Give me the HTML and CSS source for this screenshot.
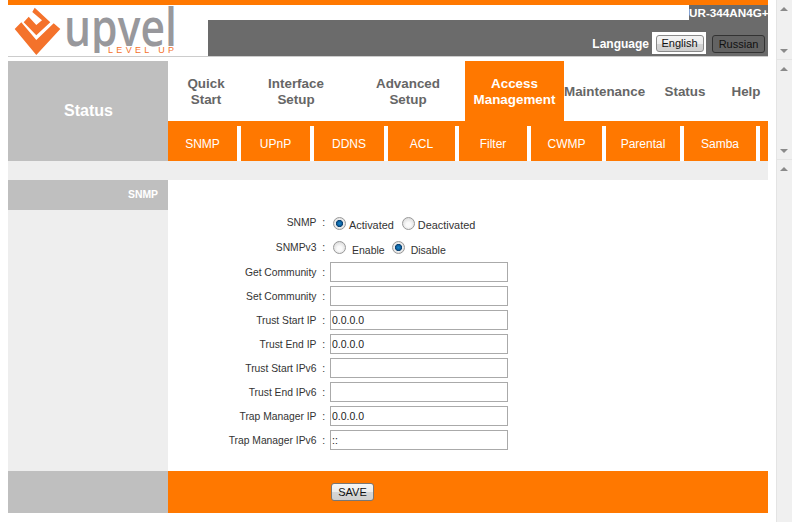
FILE: index.html
```html
<!DOCTYPE html>
<html lang="en">
<head>
<meta charset="utf-8">
<title>UR-344AN4G+ Access Management</title>
<link rel="stylesheet" href="styles.css">
</head>
<body>
<div class="page">
  <div class="main">
    <div class="topline"></div>
    <header class="header">
      <div class="logo">
        <svg class="logo-svg" width="200" height="51" viewBox="0 0 200 51">
          <defs><clipPath id="word-clip"><rect x="50" y="0" width="130" height="48"/></clipPath></defs>
          <path class="mark" d="M6.7 24 13.3 17.3 28.3 35 45.7 18.3 52.3 24 28.3 50Z"/>
          <path class="mark" d="M26.7 2.7 42.3 17.3 28.3 30.3 15.7 17.3 20.7 11.7 28.3 20 34 15.3 24.3 7Z"/>
          <g clip-path="url(#word-clip)">
            <text class="logo-word" transform="translate(56 41) scale(.82 1)">upvel</text>
          </g>
          <text class="logo-tag" x="100" y="47.5" textLength="66">LEVEL UP</text>
        </svg>
      </div>
      <div class="header-right">
        <div class="model-row"><span class="model">UR-344AN4G+</span></div>
        <div class="lang-bar">
          <span class="lang-label">Language</span>
          <span class="lang-halo"><button class="btn-en" type="button">English</button></span>
          <button class="btn-ru" type="button">Russian</button>
        </div>
      </div>
    </header>

    <div class="nav-wrap">
      <div class="section-title">Status</div>
      <div class="nav-right">
        <nav class="menu">
          <a class="m m-quick">Quick<br>Start</a>
          <a class="m m-interface">Interface<br>Setup</a>
          <a class="m m-advanced">Advanced<br>Setup</a>
          <a class="m m-access active">Access<br>Management</a>
          <a class="m m-maint">Maintenance</a>
          <a class="m m-status">Status</a>
          <a class="m m-help">Help</a>
        </nav>
        <nav class="submenu">
          <a class="s">SNMP</a>
          <a class="s">UPnP</a>
          <a class="s">DDNS</a>
          <a class="s">ACL</a>
          <a class="s">Filter</a>
          <a class="s">CWMP</a>
          <a class="s">Parental</a>
          <a class="s">Samba</a>
        </nav>
      </div>
    </div>
    <div class="band"></div>

    <div class="content">
      <aside class="side"><div class="side-head">SNMP</div></aside>
      <form class="form">
        <div class="row">
          <span class="lbl lbl-a">SNMP&nbsp; :</span>
          <span class="val">
            <input class="radio" type="radio" name="snmp" checked><span class="opt opt-a">Activated</span>
            <input class="radio radio-2" type="radio" name="snmp"><span class="opt opt-a">Deactivated</span>
          </span>
        </div>
        <div class="row">
          <span class="lbl lbl-b">SNMPv3&nbsp; :</span>
          <span class="val">
            <input class="radio" type="radio" name="v3"><span class="opt opt-b">Enable</span>
            <input class="radio radio-3" type="radio" name="v3" checked><span class="opt opt-b">Disable</span>
          </span>
        </div>
        <div class="row"><span class="lbl">Get Community&nbsp; :</span><input class="field" type="text"></div>
        <div class="row"><span class="lbl">Set Community&nbsp; :</span><input class="field" type="text"></div>
        <div class="row"><span class="lbl">Trust Start IP&nbsp; :</span><input class="field" type="text" value="0.0.0.0"></div>
        <div class="row"><span class="lbl">Trust End IP&nbsp; :</span><input class="field" type="text" value="0.0.0.0"></div>
        <div class="row"><span class="lbl">Trust Start IPv6&nbsp; :</span><input class="field" type="text"></div>
        <div class="row"><span class="lbl">Trust End IPv6&nbsp; :</span><input class="field" type="text"></div>
        <div class="row"><span class="lbl">Trap Manager IP&nbsp; :</span><input class="field" type="text" value="0.0.0.0"></div>
        <div class="row"><span class="lbl">Trap Manager IPv6&nbsp; :</span><input class="field" type="text" value="::"></div>
      </form>
    </div>

    <footer class="footer">
      <div class="foot-left"></div>
      <div class="foot-right"><button class="save" type="button">SAVE</button></div>
    </footer>
  </div>

  <div class="scrolls">
    <div class="sb sb-1"><i class="up"></i><i class="down"></i></div>
    <div class="sb sb-2"><i class="up"></i><i class="down"></i></div>
    <div class="sb sb-3"><i class="up"></i></div>
  </div>
</div>
</body>
</html>
```
FILE: styles.css
```css
* { box-sizing: border-box; }
html, body { margin: 0; padding: 0; background: #fff; }
body { font-family: "Liberation Sans", Arial, sans-serif; font-size: 12px; color: #333; overflow: hidden; }

.page { display: flex; width: 792px; height: 522px; overflow: hidden; }
.main { width: 760px; margin-left: 8px; margin-right: 8px; flex: none; }

.topline { height: 5px; background: #ff7800; }

.header { display: flex; height: 52px; border-bottom: 1px solid #ccc; }
.logo { width: 200px; flex: none; }
.logo-svg { display: block; overflow: visible; }
.mark { fill: #f4722b; }
.logo-word { font-family: "Open Sans", sans-serif; font-weight: 600; font-size: 52px; fill: #98989c; }
.logo-tag { font-family: "Liberation Sans", sans-serif; font-size: 9px; fill: #f4722b; }
.header-right { flex: 1; display: flex; flex-direction: column; }
.model-row { height: 15px; display: flex; justify-content: flex-end; }
.model { width: 79px; background: #6b6b6b; color: #fff; font-weight: bold; font-size: 11.7px; line-height: 15px; white-space: nowrap; }
.lang-bar { flex: 1; background: #6b6b6b; display: flex; align-items: flex-start; justify-content: flex-end; padding: 12px 3px 0 0; }
.lang-label { color: #fff; font-weight: bold; font-size: 12px; line-height: 24px; margin-right: 3px; }
.lang-halo { background: #fff; width: 54px; height: 22px; display: flex; align-items: center; justify-content: center; padding-left: 1px; margin-right: 6px; }
.btn-en, .btn-ru, .save { font-family: "Liberation Sans", Arial, sans-serif; font-size: 11px; padding: 0; color: #111; border-radius: 3px; }
.btn-en { width: 48px; height: 17px; border: 1px solid #8a8a8a; background: linear-gradient(#f4f4f4, #ececec 50%, #d4d4d4 52%, #cfcfcf); }
.btn-ru { width: 53px; height: 18px; margin-top: 3px; border: 1px solid #333; background: #636363; color: #111; }

.nav-wrap { display: flex; height: 100px; margin-top: 4px; }
.section-title { width: 160px; flex: none; background: #bfbfbf; color: #fff; font-weight: bold; font-size: 16px; display: flex; align-items: center; justify-content: center; padding-left: 1px; }
.nav-right { flex: 1; display: flex; flex-direction: column; }
.menu { height: 60px; display: flex; }
.m { font-weight: bold; font-size: 13.4px; line-height: 16px; color: #666; display: flex; align-items: center; justify-content: center; text-align: center; padding-top: 1px; }
.m-quick { width: 76px; }
.m-interface { width: 104px; }
.m-advanced { width: 117px; padding-left: 3px; }
.m-access { width: 99px; }
.m-maint { width: 86px; justify-content: flex-start; }
.m-status { width: 70px; }
.m-help { width: 48px; padding-left: 4px; }
.active { background: #ff7800; color: #fff; }

.submenu { height: 40px; background: #ff7800; display: grid; grid-template-columns: 73px 73px 74px 71px 72px 75px 78px 76px 8px; }
.s { margin-top: 5px; height: 35px; border-right: 4px solid #fff; color: #fff; font-size: 12px; display: flex; align-items: center; justify-content: center; }

.band { height: 19px; background: #eee; }

.content { display: flex; height: 291px; }
.side { width: 160px; flex: none; background: #eee; }
.side-head { height: 30px; background: #bfbfbf; color: #fff; font-weight: bold; font-size: 10.4px; line-height: 30px; text-align: right; padding-right: 10px; }
.form { flex: 1; padding-top: 32px; }
.row { display: flex; align-items: center; height: 24px; }
.lbl { width: 157px; flex: none; text-align: right; font-size: 10.3px; color: #333; margin-right: 5px; white-space: nowrap; }
.lbl-a { position: relative; top: -2px; }
.lbl-b { position: relative; top: -1px; }
.val { display: flex; align-items: center; }
.radio { appearance: none; -webkit-appearance: none; width: 13px; height: 13px; margin: 0; border-radius: 50%; border: 1px solid #999; background: radial-gradient(circle at 50% 60%, #fafafa 25%, #dcdcdc 80%); position: relative; top: -1px; }
.radio:checked { background: radial-gradient(circle, #1c86c8 0, #0f66a6 25%, #0b3f6e 42%, #eee 50%, #d8d8d8 90%); }
.val .radio { margin-left: 3px; }
.val .radio-2 { margin-left: 8px; }
.val .radio-3 { margin-left: 7px; }
.opt { font-size: 10.9px; color: #333; position: relative; top: 1px; }
.opt-a { margin-left: 3px; }
.opt-b { margin-left: 6px; top: 2px; font-size: 10.5px; }
.field { width: 178px; height: 20px; border: 1px solid #aaa; background: #fff; padding: 0 1px; font-family: "Liberation Sans", Arial, sans-serif; font-size: 10.5px; color: #222; border-radius: 0; outline: none; }

.footer { display: flex; height: 42px; }
.foot-left { width: 160px; background: #bfbfbf; flex: none; }
.foot-right { flex: 1; background: #ff7800; padding: 12px 0 0 163px; }
.save { display: block; width: 43px; height: 18px; border: 1px solid #777; background: linear-gradient(#f6f6f6, #ececec 50%, #d6d6d6 52%, #cfcfcf); }

.scrolls { width: 16px; flex: none; display: flex; flex-direction: column; background: #f0f0f0; border-left: 1px solid #e4e4e4; }
.sb { position: relative; border-bottom: 1px solid #e4e4e4; }
.sb-1 { height: 60px; }
.sb-2 { height: 100px; }
.sb-3 { flex: 1; border-bottom: 0; }
.up, .down { position: absolute; left: 3px; width: 0; height: 0; border-left: 4px solid transparent; border-right: 4px solid transparent; }
.up { top: 7px; border-bottom: 4px solid #8a8a8a; }
.down { bottom: 6px; border-top: 4px solid #8a8a8a; }
```
